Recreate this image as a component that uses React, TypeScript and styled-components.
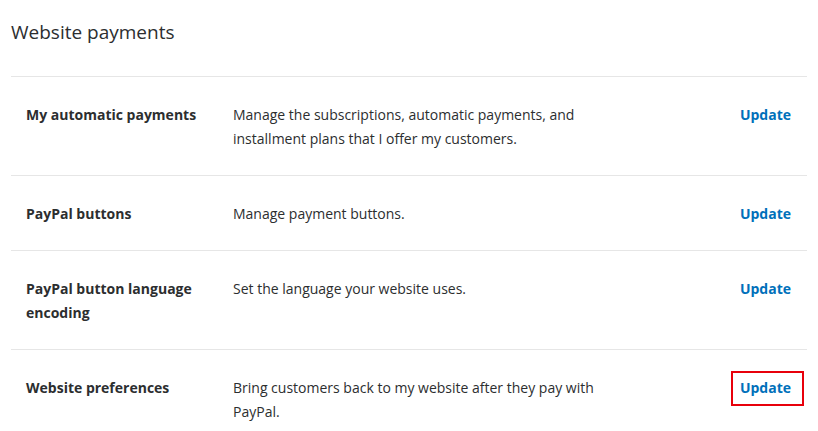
import React from "react";
import styled, { createGlobalStyle } from "styled-components";

const GlobalStyle = createGlobalStyle`
  html, body {
    margin: 0;
    padding: 0;
    background: #ffffff;
  }

  body {
    font-family: "Open Sans", "Noto Sans", sans-serif;
    color: #2c2e2f;
  }
`;

const Page = styled.section`
  padding: 0 11px;
  width: 796px;
`;

const Heading = styled.h2`
  margin: 0;
  padding: 20px 0 32px;
  font-size: 19px;
  font-weight: 400;
  line-height: 24px;
  color: #2c2e2f;
`;

const List = styled.div`
  border-top: 1px solid #e6e6e6;
`;

const Row = styled.div`
  display: grid;
  grid-template-columns: 207px 1fr auto;
  align-items: start;
  padding: 26px 16px 24px 15px;
  border-bottom: 1px solid #e6e6e6;

  &:last-child {
    border-bottom: none;
  }
`;

const Label = styled.div`
  font-size: 14px;
  font-weight: 700;
  line-height: 24px;
  padding-right: 20px;
`;

const Description = styled.div`
  font-size: 14px;
  line-height: 24px;
  max-width: 385px;
`;

const UpdateLink = styled.a<{ $highlighted?: boolean }>`
  position: relative;
  font-size: 14px;
  font-weight: 700;
  line-height: 24px;
  color: #0070ba;
  text-decoration: none;
  cursor: pointer;

  &::after {
    content: "";
    display: ${(p) => (p.$highlighted ? "block" : "none")};
    position: absolute;
    left: -9px;
    right: -13px;
    top: -5px;
    bottom: -6px;
    border: 2px solid #e8000b;
  }
`;

type Item = {
  label: string;
  description: string;
  highlighted?: boolean;
};

const items: Item[] = [
  {
    label: "My automatic payments",
    description:
      "Manage the subscriptions, automatic payments, and installment plans that I offer my customers.",
  },
  { label: "PayPal buttons", description: "Manage payment buttons." },
  {
    label: "PayPal button language encoding",
    description: "Set the language your website uses.",
  },
  {
    label: "Website preferences",
    description: "Bring customers back to my website after they pay with PayPal.",
    highlighted: true,
  },
];

const App: React.FC = () => {
  return (
    <>
      <GlobalStyle />
      <Page>
        <Heading>Website payments</Heading>
        <List>
          {items.map((item) => (
            <Row key={item.label}>
              <Label>{item.label}</Label>
              <Description>{item.description}</Description>
              <UpdateLink $highlighted={item.highlighted}>Update</UpdateLink>
            </Row>
          ))}
        </List>
      </Page>
    </>
  );
};

export default App;
